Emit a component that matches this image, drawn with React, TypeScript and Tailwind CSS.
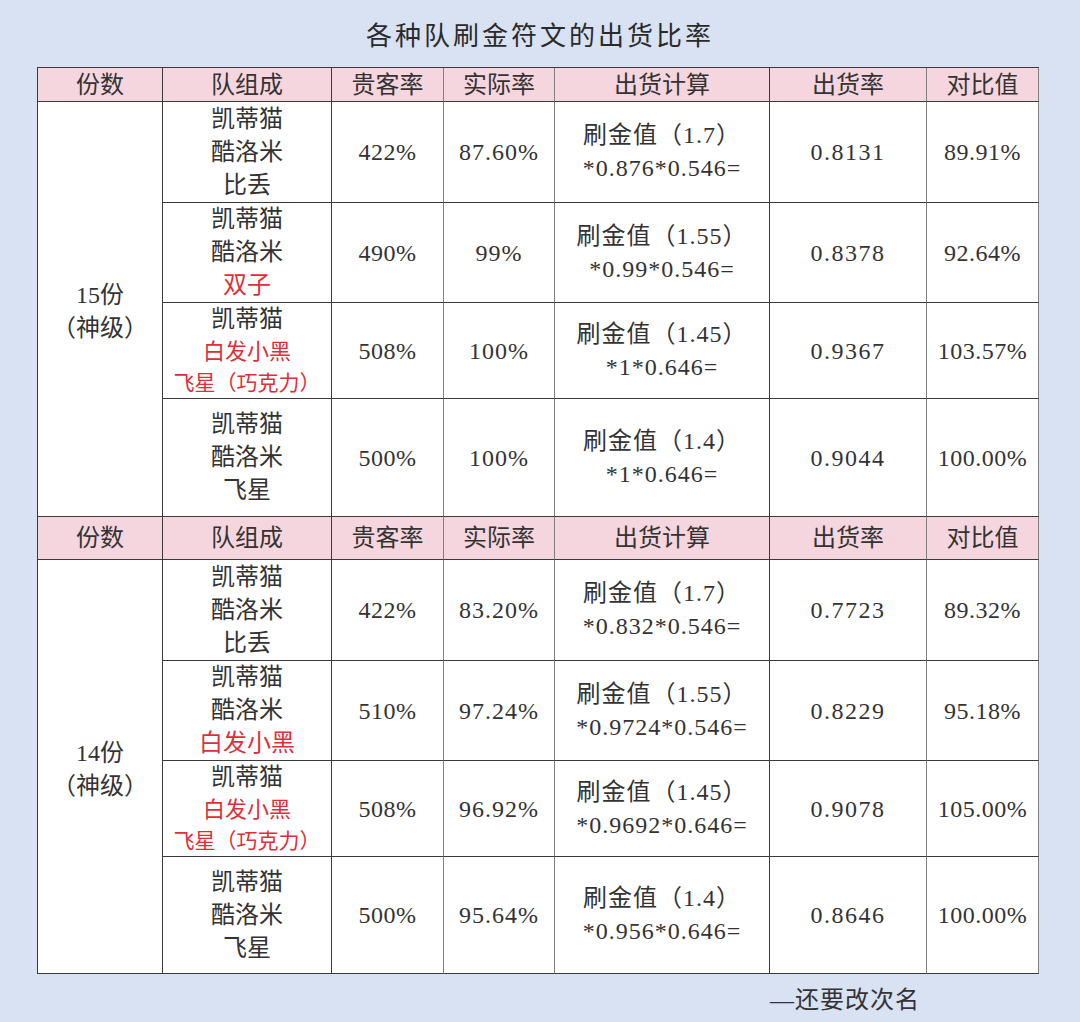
import React from "react";

type Line = { t: string; red?: boolean; small?: boolean };
type Row = {
  team: Line[];
  guest: string;
  actual: string;
  calc: [string, string];
  rate: string;
  ratio: string;
  h: string;
};

const FONT = { fontFamily: '"Liberation Serif", "Noto Sans CJK SC", serif' };

const k = (t: string): Line => ({ t });
const r = (t: string, small?: boolean): Line => ({ t, red: true, small });

const sec1: Row[] = [
  { team: [k("凯蒂猫"), k("酷洛米"), k("比丢")], guest: "422%", actual: "87.60%", calc: ["刷金值（1.7）", "*0.876*0.546="], rate: "0.8131", ratio: "89.91%", h: "h-[101px]" },
  { team: [k("凯蒂猫"), k("酷洛米"), r("双子")], guest: "490%", actual: "99%", calc: ["刷金值（1.55）", "*0.99*0.546="], rate: "0.8378", ratio: "92.64%", h: "h-[100px]" },
  { team: [k("凯蒂猫"), r("白发小黑", true), r("飞星（巧克力）", true)], guest: "508%", actual: "100%", calc: ["刷金值（1.45）", "*1*0.646="], rate: "0.9367", ratio: "103.57%", h: "h-[95px]" },
  { team: [k("凯蒂猫"), k("酷洛米"), k("飞星")], guest: "500%", actual: "100%", calc: ["刷金值（1.4）", "*1*0.646="], rate: "0.9044", ratio: "100.00%", h: "h-[118px]" },
];

const sec2: Row[] = [
  { team: [k("凯蒂猫"), k("酷洛米"), k("比丢")], guest: "422%", actual: "83.20%", calc: ["刷金值（1.7）", "*0.832*0.546="], rate: "0.7723", ratio: "89.32%", h: "h-[101px]" },
  { team: [k("凯蒂猫"), k("酷洛米"), r("白发小黑")], guest: "510%", actual: "97.24%", calc: ["刷金值（1.55）", "*0.9724*0.546="], rate: "0.8229", ratio: "95.18%", h: "h-[100px]" },
  { team: [k("凯蒂猫"), r("白发小黑", true), r("飞星（巧克力）", true)], guest: "508%", actual: "96.92%", calc: ["刷金值（1.45）", "*0.9692*0.646="], rate: "0.9078", ratio: "105.00%", h: "h-[95px]" },
  { team: [k("凯蒂猫"), k("酷洛米"), k("飞星")], guest: "500%", actual: "95.64%", calc: ["刷金值（1.4）", "*0.956*0.646="], rate: "0.8646", ratio: "100.00%", h: "h-[117px]" },
];

const dark = "border-[#3a3a3a]";
const gray = "border-[#808080]";
const colBorder = [dark, dark, gray, gray, dark, gray, gray];

function Header({ h }: { h: string }) {
  const heads = ["份数", "队组成", "贵客率", "实际率", "出货计算", "出货率", "对比值"];
  return (
    <tr className={h}>
      {heads.map((t, i) => (
        <td
          key={t}
          className={`bg-[#f6d6de] border-r border-b border-b-[#3a3a3a] ${colBorder[i]} text-center align-middle text-[24px] leading-[30px] text-[#333]`}
        >
          {t}
        </td>
      ))}
    </tr>
  );
}

function Section({ label, rows }: { label: string; rows: Row[] }) {
  const cell = "border-r border-b border-b-[#3a3a3a] text-center align-middle text-[24px] text-[#333] bg-white";
  return (
    <>
      {rows.map((row, i) => (
        <tr key={i} className={row.h}>
          {i === 0 && (
            <td rowSpan={rows.length} className={`${cell} ${colBorder[0]} leading-[33px] pt-[6px]`}>
              <div>{label.split("|")[0]}</div>
              <div>{label.split("|")[1]}</div>
            </td>
          )}
          <td className={`${cell} ${colBorder[1]}`}>
            {row.team.map((l, j) => (
              <div
                key={j}
                className={`${l.red ? "text-[#dd2f3a]" : ""} ${
                  l.small ? (l.t.length > 4 ? "text-[21px] leading-[30px]" : "text-[22px] leading-[32px]") : "leading-[33px]"
                } whitespace-nowrap`}
              >
                {l.t}
              </div>
            ))}
          </td>
          <td className={`${cell} ${colBorder[2]} tracking-[0.5px]`}>{row.guest}</td>
          <td className={`${cell} ${colBorder[3]} tracking-[1px]`}>{row.actual}</td>
          <td className={`${cell} ${colBorder[4]} leading-[33px] tracking-[1px]`}>
            <div className="whitespace-nowrap">{row.calc[0]}</div>
            <div className="whitespace-nowrap">{row.calc[1]}</div>
          </td>
          <td className={`${cell} ${colBorder[5]} tracking-[1.5px]`}>{row.rate}</td>
          <td className={`${cell} ${colBorder[6]} tracking-[0.5px]`}>{row.ratio}</td>
        </tr>
      ))}
    </>
  );
}

export default function App() {
  return (
    <div className="w-[1080px] min-h-[1022px] bg-[#d9e2f3] text-[#333]" style={FONT}>
      <div className="pt-[19px] h-[67px] text-center text-[26px] leading-[36px] tracking-[3px] text-[#2a2a2a]">
        各种队刷金符文的出货比率
      </div>
      <table className="ml-[37px] w-[1002px] table-fixed border-separate border-spacing-0 border-l border-t border-[#3a3a3a]">
        <colgroup>
          <col className="w-[125px]" />
          <col className="w-[169px]" />
          <col className="w-[112px]" />
          <col className="w-[111px]" />
          <col className="w-[215px]" />
          <col className="w-[157px]" />
          <col className="w-[112px]" />
        </colgroup>
        <tbody>
          <Header h="h-[34px]" />
          <Section label="15份|（神级）" rows={sec1} />
          <Header h="h-[43px]" />
          <Section label="14份|（神级）" rows={sec2} />
        </tbody>
      </table>
      <div className="pl-[770px] pt-[10px] text-[24px] leading-[32px] tracking-[1px] text-[#333] whitespace-nowrap">
        —还要改次名
      </div>
    </div>
  );
}
